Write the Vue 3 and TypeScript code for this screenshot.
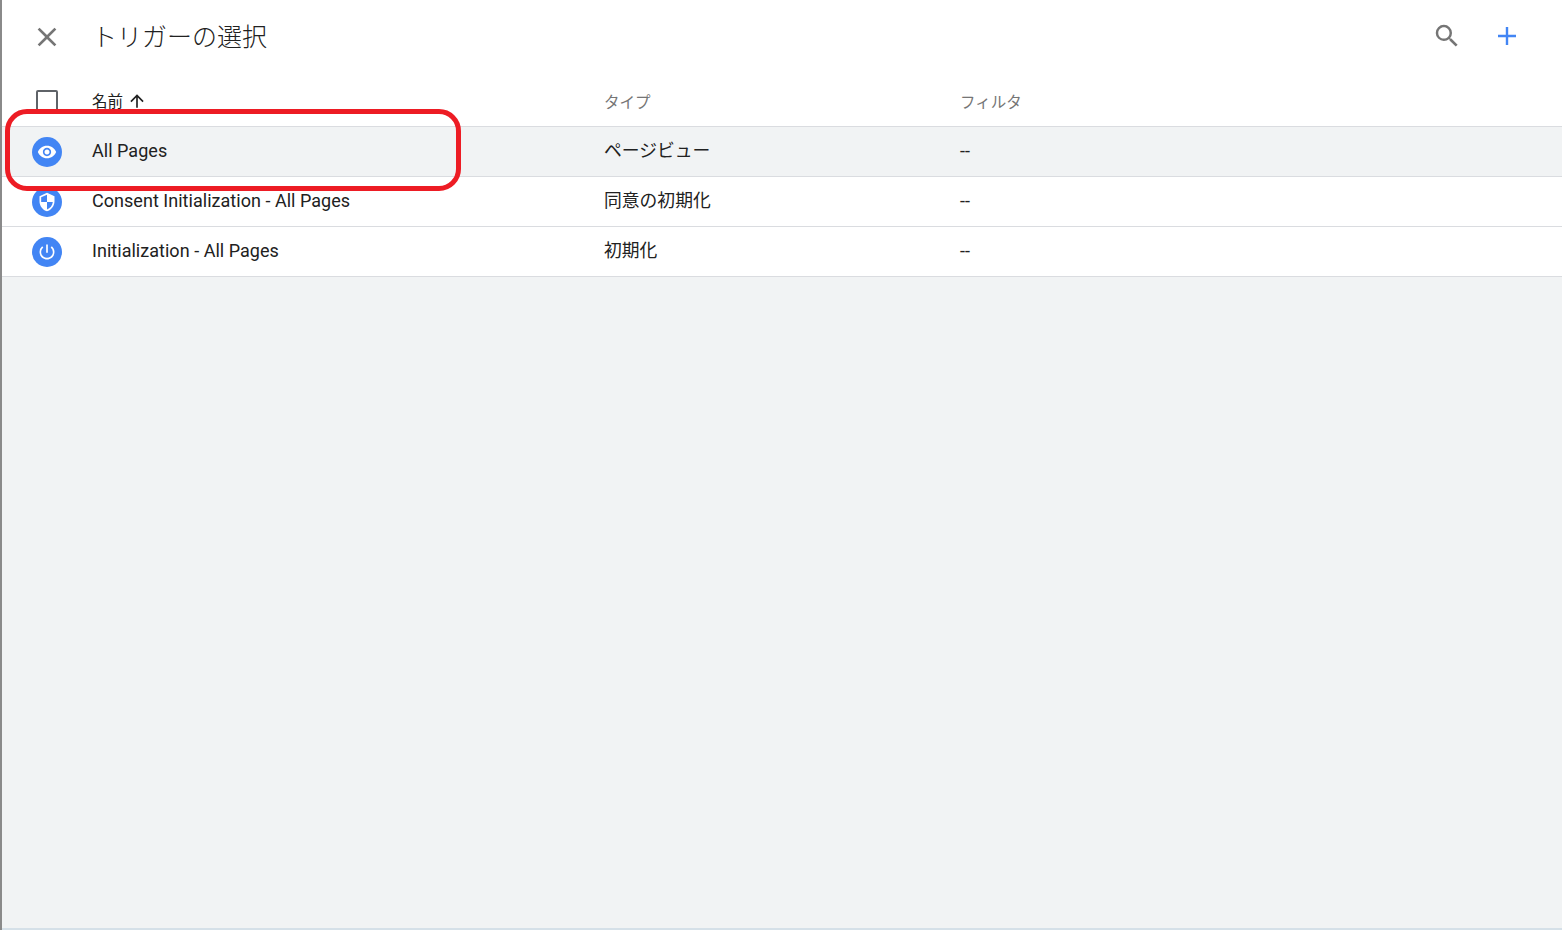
<script setup lang="ts">
interface Row { name: string; type: string; filter: string; icon: 'eye' | 'shield' | 'power'; active?: boolean }
const rows: Row[] = [
  { name: 'All Pages', type: 'ページビュー', filter: '--', icon: 'eye', active: true },
  { name: 'Consent Initialization - All Pages', type: '同意の初期化', filter: '--', icon: 'shield' },
  { name: 'Initialization - All Pages', type: '初期化', filter: '--', icon: 'power' },
]
</script>

<template>
  <div class="page">
    <div class="strip"></div>
    <main class="panel">
      <header class="top">
        <button class="close" aria-label="close">
          <svg width="32" height="32" viewBox="0 0 24 24"><path d="M19 6.41 17.59 5 12 10.59 6.41 5 5 6.41 10.59 12 5 17.59 6.41 19 12 13.41 17.59 19 19 17.59 13.41 12z" fill="#757575"/></svg>
        </button>
        <h1 class="title">トリガーの選択</h1>
        <svg class="search" width="30" height="30" viewBox="0 0 24 24"><path d="M15.5 14h-.79l-.28-.27A6.47 6.47 0 0 0 16 9.5 6.5 6.5 0 1 0 9.5 16c1.61 0 3.09-.59 4.23-1.57l.27.28v.79l5 4.99L20.49 19l-4.99-5zm-6 0C7.01 14 5 11.99 5 9.5S7.01 5 9.5 5 14 7.01 14 9.5 11.99 14 9.5 14z" fill="#757575"/></svg>
        <svg class="plus" width="28" height="28" viewBox="0 0 28 28"><path d="M12.8 5h2.4v7.8H23v2.4h-7.8V23h-2.4v-7.8H5v-2.4h7.8z" fill="#4285f4"/></svg>
      </header>
      <div class="grid head">
        <div class="lead"><span class="check"></span></div>
        <div class="h-name">
          <span class="h-label">名前</span>
          <svg width="20" height="20" viewBox="0 0 24 24"><path d="M4 12l1.41 1.41L11 7.83V20h2V7.83l5.58 5.59L20 12l-8-8z" fill="#212121"/></svg>
        </div>
        <div class="h-col">タイプ</div>
        <div class="h-col">フィルタ</div>
      </div>
      <div v-for="r in rows" :key="r.name" class="grid row" :class="{ active: r.active }">
        <div class="lead">
          <span class="badge">
            <svg v-if="r.icon === 'eye'" width="20" height="20" viewBox="0 0 24 24"><path d="M12 4.5C7 4.5 2.73 7.61 1 12c1.73 4.39 6 7.5 11 7.5s9.27-3.11 11-7.5c-1.73-4.39-6-7.5-11-7.5zM12 17c-2.76 0-5-2.24-5-5s2.24-5 5-5 5 2.24 5 5-2.24 5-5 5zm0-8c-1.66 0-3 1.34-3 3s1.34 3 3 3 3-1.34 3-3-1.34-3-3-3z" fill="#fff"/></svg>
            <svg v-else-if="r.icon === 'shield'" width="20" height="20" viewBox="0 0 24 24"><path d="M12 1 3 5v6c0 5.55 3.84 10.74 9 12 5.16-1.26 9-6.45 9-12V5l-9-4zm0 10.99h7c-.53 4.12-3.28 7.79-7 8.94V12H5V6.3l7-3.11v8.8z" fill="#fff"/></svg>
            <svg v-else width="20" height="20" viewBox="0 0 24 24"><path d="M13 3h-2v10h2V3zm4.83 2.17-1.42 1.42A6.92 6.92 0 0 1 19 12c0 3.87-3.13 7-7 7s-7-3.13-7-7c0-2.19 1.01-4.14 2.58-5.42L6.17 5.17A8.932 8.932 0 0 0 3 12c0 4.97 4.03 9 9 9s9-4.03 9-9c0-2.74-1.23-5.18-3.17-6.83z" fill="#fff"/></svg>
          </span>
        </div>
        <div class="cell name">{{ r.name }}</div>
        <div class="cell kind">{{ r.type }}</div>
        <div class="cell">{{ r.filter }}</div>
      </div>
      <div class="rest"></div>
    </main>
    <div class="note"></div>
  </div>
</template>

<style>
html, body { margin: 0; padding: 0; overflow: hidden; }
</style>

<style scoped>
.page {
  position: relative;
  display: flex;
  width: 1562px;
  height: 930px;
  overflow: hidden;
  font-family: Roboto, "Noto Sans CJK JP", sans-serif;
  color: #212121;
  background: #fff;
}
.strip { width: 2px; flex: none; background: #8a8a8a; }
.panel { flex: 1; display: flex; flex-direction: column; min-width: 0; }
.top { height: 76px; flex: none; display: flex; align-items: center; }
.close {
  width: 32px; height: 32px; padding: 0; border: 0; background: none;
  margin-left: 29px; margin-top: -3px; flex: none;
}
.close svg { display: block; }
.title {
  margin: 0 0 0 29px; flex: 1;
  font-size: 25px; line-height: 32px; font-weight: 300; color: #212121;
}
.search { margin: -5px 1px 0 0; flex: none; }
.plus { margin: -5px 41px 0 30px; flex: none; }
.grid { display: grid; grid-template-columns: 90px 512px 356px 1fr; box-sizing: border-box; align-items: center; }
.head { height: 51px; border-bottom: 1px solid #dadce0; }
.row { height: 50px; border-bottom: 1px solid #dadce0; font-size: 18px; background: #fff; }
.row.active { background: #f1f3f4; }
.lead { display: flex; justify-content: center; }
.check {
  width: 18px; height: 18px; border: 2px solid #5f6368; border-radius: 2px;
}
.h-name { display: flex; align-items: center; gap: 4px; color: #212121; font-size: 15.5px; padding-bottom: 1px; }
.h-label { margin-top: -2px; }
.h-col { color: #757575; font-size: 15.5px; padding-bottom: 1px; }
.cell { color: #212121; line-height: 24px; padding-bottom: 2px; }
.name { letter-spacing: 0.03px; }
.kind { font-size: 17.8px; }
.badge {
  width: 30px; height: 30px; border-radius: 50%; background: #4285f4;
  display: flex; align-items: center; justify-content: center;
}
.badge svg { display: block; }
.rest { flex: 1; background: #f1f3f4; border-bottom: 2px solid #d5e0e8; }
.note {
  position: absolute; left: 5px; top: 109px; width: 456px; height: 82px;
  box-sizing: border-box; border: 5px solid #ed1c24; border-radius: 22px;
  pointer-events: none;
}
</style>
